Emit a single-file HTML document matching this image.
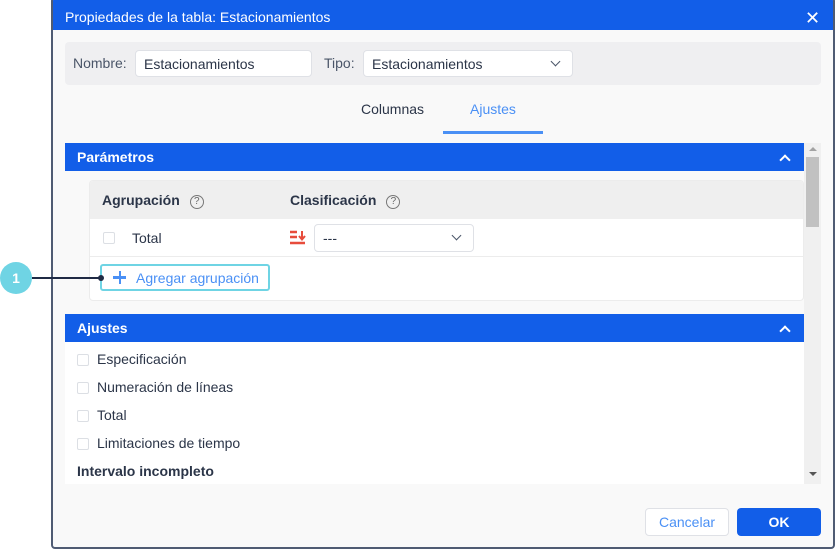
<!DOCTYPE html>
<html><head><style>
*{box-sizing:border-box;margin:0;padding:0}
body{width:835px;height:550px;background:#fff;font-family:"Liberation Sans",sans-serif;position:relative;overflow:hidden;color:#2b3548;font-size:14px}
.a{position:absolute}
.dlg{left:51px;top:-3px;width:784px;height:552px;border:2px solid #4f5b73;border-radius:4px;background:#f9f9f9;overflow:hidden}
.hdr{left:0;top:0;width:780px;height:31px;background:#125ee8;color:#fff;font-size:14px;padding:10px 0 0 12px}
.inp{background:#fff;border:1px solid #dfe1e6;border-radius:4px;font-size:14px;padding:5px 8px}
.chev{position:absolute;width:7px;height:7px;border-right:1.6px solid #4a5568;border-bottom:1.6px solid #4a5568;transform:rotate(45deg)}
.bar{background:#125ee8;color:#fff;font-weight:bold;font-size:14px;padding:6px 0 0 12px;height:28px}
.up{position:absolute;width:8px;height:8px;border-left:2.5px solid #fff;border-top:2.5px solid #fff;transform:rotate(45deg)}
.cb{position:absolute;width:12px;height:12px;border:1px solid #dcdfe4;border-radius:2px;background:#fff}
.q{display:inline-block;width:14px;height:14px;border:1px solid #777;border-radius:50%;font-size:10px;text-align:center;line-height:12px;color:#666;font-weight:normal;margin-left:10px;vertical-align:1px}
</style></head><body>
<div class="a dlg">
 <div class="a hdr">Propiedades de la tabla: Estacionamientos</div>
 <div class="a" style="left:752px;top:10px;color:#fff;font-size:18px;line-height:18px">✕</div>
 <div class="a" style="left:12px;top:43px;width:756px;height:43px;background:#efeff1;border-radius:4px"></div>
 <div class="a" style="left:20px;top:56px;color:#4a5568">Nombre:</div>
 <div class="a inp" style="left:82px;top:51px;width:177px;height:27px">Estacionamientos</div>
 <div class="a" style="left:271px;top:56px;color:#4a5568">Tipo:</div>
 <div class="a inp" style="left:310px;top:51px;width:210px;height:27px">Estacionamientos<span class="chev" style="left:188px;top:7px"></span></div>
 <div class="a" style="left:308px;top:102px">Columnas</div>
 <div class="a" style="left:417px;top:102px;color:#4a90f5">Ajustes</div>
 <div class="a" style="left:390px;top:132px;width:100px;height:3px;background:#4a90f5"></div>
 <div class="a" style="left:12px;top:144px;width:756px;height:341px;background:#fff;overflow:hidden">
  <div class="a bar" style="left:0;top:0;width:739px">Parámetros</div>
  <span class="up" style="left:716px;top:13px"></span>
  <div class="a" style="left:0;top:28px;width:739px;height:143px;background:#f9f9f9"></div>
  <div class="a" style="left:24px;top:37px;width:715px;height:121px;background:#fff;border:1px solid #ececec;border-radius:4px;overflow:hidden">
   <div class="a" style="left:0;top:0;width:715px;height:38px;background:#efefef;font-weight:bold;padding:11px 0 0 12px">Agrupación<span class="q">?</span></div>
   <div class="a" style="left:200px;top:11px;font-weight:bold">Clasificación<span class="q">?</span></div>
   <span class="cb" style="left:13px;top:51px"></span>
   <div class="a" style="left:42px;top:49px">Total</div>
   <svg class="a" style="left:199px;top:48px" width="18" height="18" viewBox="0 0 18 18"><g stroke="#e74c3c" stroke-width="2.4" fill="none"><path d="M1 3h7M1 8h7M1 14h15"/><path d="M13 2v8M10 7l3 3.5L16 7" stroke-width="2"/></g></svg>
   <div class="a inp" style="left:224px;top:43px;width:160px;height:28px">---<span class="chev" style="left:138px;top:7px"></span></div>
   <div class="a" style="left:0;top:75px;width:715px;height:1px;background:#ececec"></div>
   <div class="a" style="left:10px;top:83px;width:170px;height:27px;border:2px solid #6fd4e4;border-radius:3px;color:#4a90f5;padding:4px 0 0 34px">Agregar agrupación</div>
   <div class="a" style="left:23px;top:95px;width:13px;height:2.5px;background:#4a90f5"></div>
   <div class="a" style="left:28.5px;top:90px;width:2.5px;height:13px;background:#4a90f5"></div>
  </div>
  <div class="a bar" style="left:0;top:171px;width:739px">Ajustes</div>
  <span class="up" style="left:716px;top:184px"></span>
  <span class="cb" style="left:12px;top:211px"></span><div class="a" style="left:32px;top:208px">Especificación</div>
  <span class="cb" style="left:12px;top:239px"></span><div class="a" style="left:32px;top:236px">Numeración de líneas</div>
  <span class="cb" style="left:12px;top:267px"></span><div class="a" style="left:32px;top:264px">Total</div>
  <span class="cb" style="left:12px;top:295px"></span><div class="a" style="left:32px;top:292px">Limitaciones de tiempo</div>
  <div class="a" style="left:12px;top:320px;font-weight:bold">Intervalo incompleto</div>
  <div class="a" style="left:739px;top:0;width:17px;height:341px;background:#f0f0f0"></div>
  <div class="a" style="left:741px;top:14px;width:13px;height:70px;background:#c1c1c1"></div>
  <div class="a" style="left:744px;top:4px;border:4px solid transparent;border-bottom-color:#a3a3a3;border-top:0"></div>
  <div class="a" style="left:744px;top:329px;border:4px solid transparent;border-top-color:#555;border-bottom:0"></div>
 </div>
 <div class="a" style="left:592px;top:509px;width:84px;height:28px;background:#fff;border:1px solid #dfe1e6;border-radius:4px;color:#4a90f5;text-align:center;line-height:26px">Cancelar</div>
 <div class="a" style="left:684px;top:509px;width:84px;height:28px;background:#125ee8;border-radius:4px;color:#fff;text-align:center;line-height:28px;font-weight:bold">OK</div>
</div>
<div class="a" style="left:0;top:262px;width:32px;height:32px;border-radius:50%;background:#6fd4e4;color:#fff;font-weight:bold;font-size:14px;text-align:center;line-height:32px;z-index:5">1</div>
<div class="a" style="left:32px;top:277px;width:70px;height:2px;background:#1f2a44;z-index:5"></div>
<div class="a" style="left:98px;top:275px;width:6px;height:6px;border-radius:50%;background:#1f2a44;z-index:5"></div>
</body></html>
